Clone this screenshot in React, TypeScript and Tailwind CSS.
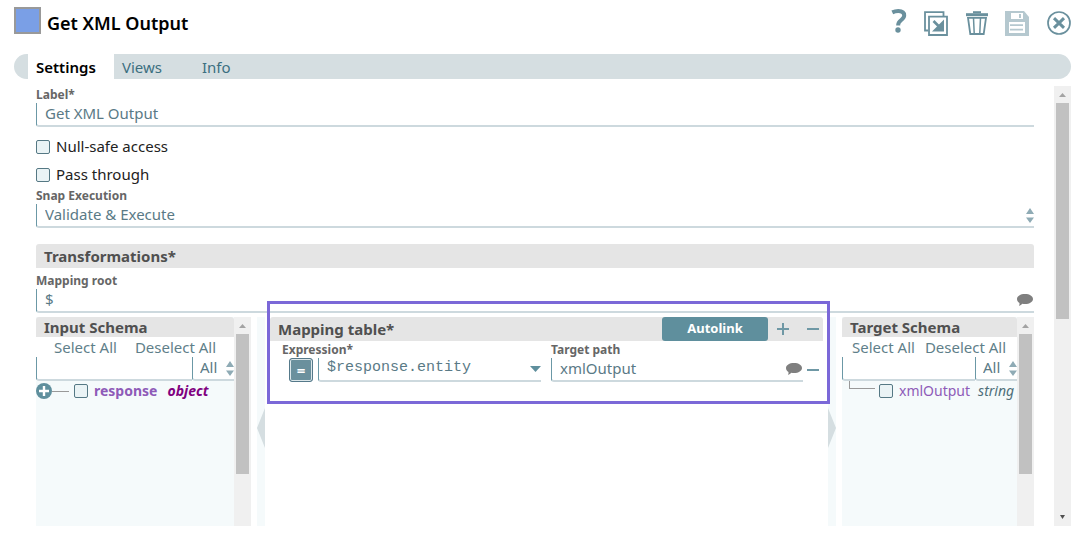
import { useState } from "react";
import type { ReactNode } from "react";
import clsx from "clsx";

const fieldBox = "flex h-6 items-start rounded-bl-[3px] border-b-2 border-l border-b-[#cdd9de] border-l-[#6b98a6]";
const fieldText = "min-w-0 bg-transparent text-[15px] leading-5 text-[#5a7a86] outline-none";

const HelpIcon = () => (
  <svg width="16" height="24" viewBox="0 0 16 24" fill="none" stroke="#6a909d" strokeWidth="4">
    <path d="M1.300 3.400C3.500 2.300 5.300 2 7.300 2c3.900 0 5.900 1.700 5.900 4.500 0 4.500-6 4.500-6 9.300v.7" />
    <circle cx="7" cy="21" r="2.700" fill="#6a909d" stroke="none" />
  </svg>
);

const ExportIcon = () => (
  <svg width="24" height="25" viewBox="0 0 24 25" fill="none" stroke="#6a909d" strokeWidth="1.8">
    <path d="M4 19.500H1V1.200h18.500V5" />
    <path d="M5 5.600h18V24H5z" />
    <path d="M20 8.500v12H8z" fill="#6a909d" stroke="none" />
    <path d="M9.500 10l5 5" strokeWidth="2.600" />
  </svg>
);

const TrashIcon = () => (
  <svg width="22" height="24" viewBox="0 0 22 24" fill="none" stroke="#6a909d" strokeWidth="1.8">
    <path d="M0 3.700h22" strokeWidth="3" />
    <path d="M7 1.200h8" strokeWidth="2" />
    <path d="M2 6.800h18L17.700 23H4.300z" />
    <path d="M7.500 7l.7 15M14.500 7l-.7 15" strokeWidth="1.500" />
  </svg>
);

const SaveIcon = () => (
  <svg width="24" height="25" viewBox="0 0 24 25">
    <path d="M0 0h19l5 6v19H0z" fill="#b5c8cf" />
    <path d="M6 2h12v6H6zM4 11h16v11H4z" fill="#fff" />
    <path d="M14 3h2v4h-2z" fill="#b5c8cf" />
    <path d="M5 14.200h13M5 18.600h13" stroke="#b5c8cf" strokeWidth="1.800" />
  </svg>
);

const CloseIcon = () => (
  <svg width="24" height="24" viewBox="0 0 24 24" fill="none" stroke="#6a909d">
    <circle cx="12" cy="12" r="11" strokeWidth="1.700" />
    <path d="M7 7.200l10 9.600M17 7.200L7 16.800" strokeWidth="3" />
  </svg>
);

const CommentIcon = () => (
  <svg width="16" height="12" viewBox="0 0 16 12" fill="#7f7f7f" className="mr-px shrink-0 self-center">
    <path d="M8 0c4.600 0 8 2.100 8 5s-3.400 5-8 5c-1 0-1.800-.1-2.600-.3C4.500 10.700 3.300 11.500 2 12c.4-.9.6-2 .5-3.100C.9 8 0 6.600 0 5c0-2.900 3.400-5 8-5z" />
  </svg>
);

const SortArrows = () => (
  <svg width="8" height="15" viewBox="0 0 8 15" fill="#8fabb5" className="pointer-events-none shrink-0 self-center">
    <path d="M4 0l4 6H0zM4 15L0 9.500h8z" />
  </svg>
);

const Minus = () => (
  <svg width="12" height="12" viewBox="0 0 12 12" stroke="#6f98a5" strokeWidth="2">
    <path d="M0 6h12" />
  </svg>
);

const Plus = () => (
  <svg width="12" height="12" viewBox="0 0 12 12" stroke="#6f98a5" strokeWidth="2">
    <path d="M0 6h12M6 0v12" />
  </svg>
);

const Check = ({ id, label }: { id?: string; label?: string }) => (
  <input
    id={id}
    type="checkbox"
    aria-label={label}
    className="size-3.5 shrink-0 appearance-none rounded-xs border border-[#557884] bg-[#eaf3f5] checked:bg-[#5f8f9d]"
  />
);

const FieldLabel = ({ htmlFor, children }: { htmlFor: string; children: ReactNode }) => (
  <label htmlFor={htmlFor} className="block text-[12px] leading-4 font-bold text-[#666]">
    {children}
  </label>
);

const Scrollbar = ({ thumb, down }: { thumb: string; down?: boolean }) => (
  <div className="flex w-[17px] shrink-0 flex-col items-center bg-[#f0f0f0]">
    <svg width="17" height="17" viewBox="0 0 17 17" className="shrink-0" fill="#a3a3a3">
      <path d="M5 11h7L8.500 7z" />
    </svg>
    <div className={clsx("w-[13px] bg-[#c1c1c1]", thumb)} />
    {down && (
      <svg width="17" height="17" viewBox="0 0 17 17" className="mt-auto shrink-0" fill="#505050">
        <path d="M6 6h5l-2.500 4z" />
      </svg>
    )}
  </div>
);

const Splitter = ({ side }: { side: "left" | "right" }) => (
  <div className="flex w-2 shrink-0 items-center bg-[#f5fafb]">
    <svg width="8" height="40" viewBox="0 0 8 40" fill="#d5dee1" className="mt-3">
      {side === "left" ? <path d="M8 0v40L0 20z" /> : <path d="M0 0v40l8-20z" />}
    </svg>
  </div>
);

const SchemaPanel = ({ title, width, actions, children }: { title: string; width: string; actions: string; children: ReactNode }) => (
  <section className={clsx("flex shrink-0", width)}>
    <div className="min-w-0 flex-1 bg-[#f5fafb]">
      <h3 className="h-5 rounded-t-[3px] bg-[#e5e5e5] pl-2 text-[15px] leading-5 font-bold text-[#505050]">{title}</h3>
      <div className={clsx("flex h-5 bg-white text-[15px] leading-5 whitespace-nowrap text-[#5f7f8a]", actions)}>
        <button>Select All</button>
        <button>Deselect All</button>
      </div>
      <div className="flex bg-white">
        <div className={clsx(fieldBox, "min-w-0 flex-1")}>
          <input aria-label={`Search ${title}`} className={clsx(fieldText, "w-full px-2")} />
        </div>
        <div className={clsx(fieldBox, "w-[42px]")}>
          <select aria-label={`Filter ${title}`} className={clsx(fieldText, "flex-1 appearance-none pl-[7px]")}>
            <option>All</option>
          </select>
          <SortArrows />
        </div>
      </div>
      {children}
    </div>
    <Scrollbar thumb="h-[140px]" />
  </section>
);

const tabs = ["Settings", "Views", "Info"];

export default function App() {
  const [tab, setTab] = useState("Settings");

  return (
    <div className="bg-white pr-[13px] pl-3.5 font-['Noto_Sans','Open_Sans',sans-serif] text-[15px] text-[#222]">
      <header className="flex h-[54px] items-start pt-[7px]">
        <div className="size-[27px] border-2 border-[#999] bg-[#7a9fe6]" />
        <h1 className="ml-1.5 pt-1 text-[18px] leading-6 font-semibold text-black">Get XML Output</h1>
        <div className="ml-auto flex h-8 items-center">
          <button aria-label="Help" className="mr-[17px] pb-1"><HelpIcon /></button>
          <button aria-label="Export" className="mr-[18px]"><ExportIcon /></button>
          <button aria-label="Delete" className="mr-[17px]"><TrashIcon /></button>
          <button aria-label="Save" className="mr-[18px]"><SaveIcon /></button>
          <button aria-label="Close"><CloseIcon /></button>
        </div>
      </header>

      <nav className="flex h-[25px] rounded-full bg-[#d5dee1] pl-3.5">
        {tabs.map((name) => (
          <button
            key={name}
            onClick={() => setTab(name)}
            className={clsx(
              "pl-2 text-left leading-6",
              name === "Settings" ? "w-[86px]" : "w-20",
              tab === name ? "bg-white font-semibold text-black" : "text-[#3b6f80]",
            )}
          >
            {name}
          </button>
        ))}
      </nav>

      <div className="mt-[7px] flex">
        <main className="mr-5 ml-[22px] min-w-0 flex-1 pt-px">
          <FieldLabel htmlFor="label">Label*</FieldLabel>
          <div className={fieldBox}>
            <input id="label" defaultValue="Get XML Output" className={clsx(fieldText, "flex-1 px-2")} />
          </div>

          <div className="flex flex-col gap-2 pt-2.5 pb-[3px]">
            <div className="flex h-5 items-center gap-1.5">
              <Check id="null-safe" />
              <label htmlFor="null-safe" className="h-5 leading-[18px]">Null-safe access</label>
            </div>
            <div className="flex h-5 items-center gap-1.5">
              <Check id="pass-through" />
              <label htmlFor="pass-through" className="h-5 leading-[18px]">Pass through</label>
            </div>
          </div>

          <FieldLabel htmlFor="execution">Snap Execution</FieldLabel>
          <div className={fieldBox}>
            <select id="execution" className={clsx(fieldText, "flex-1 appearance-none pl-2")}>
              <option>Validate &amp; Execute</option>
              <option>Execute only</option>
              <option>Disabled</option>
            </select>
            <SortArrows />
          </div>

          <h2 className="mt-4 mb-[5px] h-6 rounded-t-[3px] bg-[#e5e5e5] pl-2 leading-6 font-bold text-[#505050]">Transformations*</h2>

          <FieldLabel htmlFor="root">Mapping root</FieldLabel>
          <div className={fieldBox}>
            <input id="root" defaultValue="$" className={clsx(fieldText, "flex-1 px-2")} />
            <CommentIcon />
          </div>

          <div className="mt-1 flex h-[209px]">
            <SchemaPanel title="Input Schema" width="w-[215px]" actions="gap-[18px] pl-[18px]">
              <div className="flex h-5 items-center text-[14px] leading-5">
                <svg width="16" height="16" viewBox="0 0 16 16">
                  <circle cx="8" cy="8" r="8" fill="#5f8f9d" />
                  <path d="M3 8h10M8 3v10" stroke="#fff" strokeWidth="2.400" />
                </svg>
                <div className="mr-[5px] h-px w-[17px] bg-[#999]" />
                <Check label="response" />
                <span className="ml-1.5 font-bold text-[#8e5bb8]">response</span>
                <span className="ml-2.5 font-bold text-[#800080] italic">object</span>
              </div>
            </SchemaPanel>

            <div className="ml-1.5 flex"><Splitter side="left" /></div>

            <section className="relative min-w-0 flex-1 pr-[5px] pl-[5px]">
              <div className="flex h-6 items-center rounded-t-[3px] bg-[#e5e5e5] pr-1 pl-2">
                <h3 className="flex-1 font-bold text-[#505050]">Mapping table*</h3>
                <button className="h-6 w-[106px] rounded-[3px] bg-[#5f8f9d] text-[13px] font-bold text-white">Autolink</button>
                <button aria-label="Add row" className="ml-[9px]"><Plus /></button>
                <button aria-label="Remove all rows" className="ml-[18px]"><Minus /></button>
              </div>
              <div className="flex items-end pt-px pr-1">
                <div className="grid flex-1 grid-cols-[271fr_252fr] gap-2.5">
                  <div className="min-w-0 pl-3">
                    <FieldLabel htmlFor="expression">Expression*</FieldLabel>
                    <div className="flex gap-[5px] pl-[7px]">
                      <button aria-label="Toggle expression" className="grid size-6 shrink-0 place-items-center rounded-[3px] border border-[#55798a] bg-[#6a909d] text-[15px] font-bold text-white ring-1 ring-[#dce7ea] ring-inset">
                        =
                      </button>
                      <div className={clsx(fieldBox, "min-w-0 flex-1")}>
                        <input
                          id="expression"
                          defaultValue="$response.entity"
                          className="min-w-0 flex-1 bg-transparent px-2 font-['Liberation_Mono',monospace] text-[15px] leading-5 text-[#5a7a86] outline-none"
                        />
                        <svg width="11" height="6" viewBox="0 0 11 6" fill="#5f8f9d" className="shrink-0 self-center">
                          <path d="M0 0h11L5.500 6z" />
                        </svg>
                      </div>
                    </div>
                  </div>
                  <div className="min-w-0">
                    <FieldLabel htmlFor="target">Target path</FieldLabel>
                    <div className={fieldBox}>
                      <input id="target" defaultValue="xmlOutput" className={clsx(fieldText, "flex-1 px-2")} />
                      <CommentIcon />
                    </div>
                  </div>
                </div>
                <button aria-label="Remove row" className="ml-1 flex h-6 items-center"><Minus /></button>
              </div>
              <div className="pointer-events-none absolute -top-4 -right-0.5 left-0.5 h-[103px] border-3 border-[#7b68d8]" />
            </section>

            <div className="mr-1.5 flex"><Splitter side="right" /></div>

            <SchemaPanel title="Target Schema" width="w-48" actions="gap-2.5 pl-2.5">
              <div className="flex h-5 items-center text-[14px] leading-5 whitespace-nowrap">
                <div className="mr-1 ml-[7px] h-2 w-[26px] shrink-0 self-start border-b border-l border-[#999]" />
                <Check label="xmlOutput" />
                <span className="ml-1.5 text-[#8e5bb8]">xmlOutput</span>
                <span className="ml-2 text-[#4f6f7a] italic">string</span>
              </div>
            </SchemaPanel>
          </div>
        </main>
        <Scrollbar thumb="h-[216px]" down />
      </div>
    </div>
  );
}
